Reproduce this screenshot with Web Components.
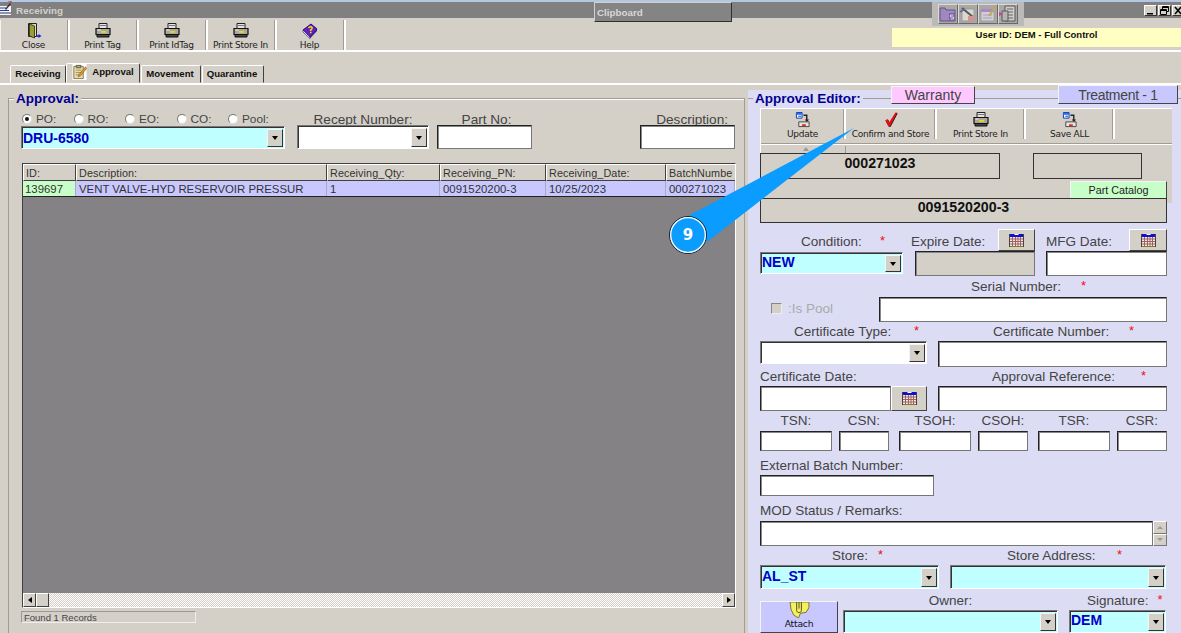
<!DOCTYPE html>
<html>
<head>
<meta charset="utf-8">
<title>Receiving</title>
<style>
html, body { margin: 0; padding: 0; background: #d4d0c8; overflow: hidden; }
body { width: 1181px; height: 633px; font-family: "Liberation Sans", Arial, sans-serif; }
</style>
</head>
<body>
<receiving-window></receiving-window>
<script>
var ICONS = {
  printer: '<svg width="16" height="15" viewBox="0 0 16 15"><path d="M4 .5h8v5H4z" fill="#e4e4e4" stroke="#222"/><path d="M5 2.500h6" stroke="#777"/><path d="M1 5.500h14v6H1z" fill="#aaa6a0" stroke="#111" stroke-width="1.200"/><path d="M2 11.500h12v2.500H2z" fill="#444" stroke="#111"/><path d="M6 8h5v1.800H6z" fill="#e8d820"/><path d="M2.500 7h3" stroke="#f4f4f4"/></svg>',
  door: '<svg width="16" height="18" viewBox="0 0 16 18"><path d="M2.500 1.500h8v13h-8z" fill="#e0dcc0" stroke="#222"/><path d="M3.500 2l5 2v12l-5-2z" fill="#a09c30" stroke="#222" stroke-width=".8"/><path d="M10 14h3" stroke="#1a2ac0" stroke-width="1.500"/><path d="M12.500 12l3 2-3 2z" fill="#1a2ac0"/></svg>',
  help: '<svg width="16" height="16" viewBox="0 0 16 16"><path d="M1 7l8-6 6 5-7 8z" fill="#6a20b8" stroke="#201060"/><path d="M1 7l7 7v1.500L1 9z" fill="#e8e8ff" stroke="#201060" stroke-width=".6"/><path d="M8 14l7-8v2l-7 7.500z" fill="#3020a0"/><path d="M6.500 5c1-2 4-1.500 3.500 .5-.3 1-1.500 1-1.500 2.500" fill="none" stroke="#f0e020" stroke-width="1.500"/><path d="M8 9.500h1.500" stroke="#f0e020" stroke-width="1.300"/></svg>',
  check: '<svg width="16" height="17" viewBox="0 0 18 18"><path d="M2.500 10l2.500-1.500 2 3.500 7-11 2 .5-8 15h-2z" fill="#111" transform="translate(.6 .6)"/><path d="M2.500 10l2.500-1.500 2 3.500 7-11 2 .5-8 15h-2z" fill="#e01018"/></svg>',
  update: '<svg width="16" height="16" viewBox="0 0 16 17"><path d="M1 .5h6v6H1z" fill="#fff" stroke="#1030c0"/><path d="M1 1h6v2H1z" fill="#1a78e0"/><path d="M3 4.500h3" stroke="#1030c0"/><path d="M8.500 3.500h3.500v5" fill="none" stroke="#222" stroke-width="1.500"/><path d="M10 8l2 3 2.500-3z" fill="#222"/><path d="M3.500 10.500h11v5h-11z" fill="#e8e4dc" stroke="#444"/><path d="M7 13h4v2H7z" fill="#d83030"/></svg>',
  calendar: '<svg width="15" height="15" viewBox="0 0 15 15"><path d="M1 1h13v3H1z" fill="#1010d0"/><path d="M5.500 1.500h4" stroke="#fff"/><path d="M1 4h13v9H1z" fill="#f4e8e0"/><path d="M1 6h13M1 8.500h13M1 11h13M3.500 4v9M6.500 4v9M9 4v9M11.500 4v9" stroke="#a06060"/><path d="M1 13h13v1H1z" fill="#808020"/><path d="M.5 1v13M14.500 1v13" stroke="#444"/></svg>',
  attach: '<svg width="21" height="16" viewBox="0 0 22 17"><path d="M1 0h20v6l-3 5-6 1-2 5-5-3-3-6z" fill="#f4f060" stroke="#707030"/><path d="M8 0v9c0 3 5 3 5 0V0M10.500 0v7" fill="none" stroke="#504820"/></svg>',
  note: '<svg width="15" height="16" viewBox="0 0 15 17"><path d="M0 0h15v17H0z" fill="#fff"/><path d="M1.500 2.500h10v13h-10z" fill="#e8dca8" stroke="#807850"/><path d="M4 1.500h5v2.500H4z" fill="#b0a888" stroke="#605840"/><path d="M3.500 6.500h6M3.500 9h6M3.500 11.500h4" stroke="#a09060"/><path d="M14 3L7 11l-1 2.500 2.500-1L15 5z" fill="#e0a030" stroke="#704810" stroke-width=".6"/></svg>',
  mail: '<svg width="12" height="14" viewBox="0 0 12 14"><path d="M0 5h11v9H0z" fill="#f4f4f4"/><path d="M0 7h6M0 9.500h9" stroke="#2040a0"/><path d="M0 12h11" stroke="#303060"/><path d="M5 8l5-6 1 1-5 6z" fill="#303030"/><path d="M8 0h3v2" fill="none" stroke="#c03020"/></svg>',
  s1: '<svg width="18" height="18" viewBox="0 0 18 18"><path d="M1 3h5l1 2h9v11H1z" fill="#a080c8" stroke="#504080"/><path d="M10 8h6v8h-6z" fill="#7050a8"/><path d="M14.500 10h-3v2h3v2h-3" fill="none" stroke="#e8e8f4"/></svg>',
  s2: '<svg width="18" height="18" viewBox="0 0 18 18"><path d="M3 4h12v12H3z" fill="#e8e4dc" stroke="#999"/><path d="M3 3l11 9" stroke="#444" stroke-width="2"/><path d="M9 11h6v5H9z" fill="#e09090"/><path d="M1 7l5-3" stroke="#506090" stroke-width="2"/></svg>',
  s3: '<svg width="18" height="18" viewBox="0 0 18 18"><path d="M2 5h13v11H2z" fill="#dcd8e8" stroke="#a0a0a0"/><path d="M2 4h13v3H2z" fill="#b080c8"/><path d="M4 10h9M4 13h9" stroke="#a0a0c0"/><path d="M10 11l6-9" stroke="#c8a840" stroke-width="2"/></svg>',
  s4: '<svg width="18" height="18" viewBox="0 0 18 18"><path d="M6 1h10v15H6z" fill="#d8d8d8" stroke="#444"/><path d="M8 4h6M8 7h6M8 10h6M8 13h6" stroke="#555"/><path d="M3 6h6v10H3z" fill="#b8b8b8" stroke="#444"/><path d="M0 7l4 2-4 2z" fill="#c83080"/></svg>',
  minimize: '<svg width="11" height="9" viewBox="0 0 11 9"><path d="M2 7h6v1.500H2z" fill="#000"/></svg>',
  restore: '<svg width="11" height="9" viewBox="0 0 11 9"><path d="M3.500 .5h6v5h-6zM3.500 1.500h6" fill="none" stroke="#000"/><path d="M1.500 3.500h6v5h-6z" fill="#d4d0c8" stroke="#000"/><path d="M1.500 4.500h6" stroke="#000"/></svg>',
  close: '<svg width="11" height="9" viewBox="0 0 11 9"><path d="M2 1l6 7M8 1l-6 7" stroke="#000" stroke-width="1.500"/></svg>'
};

var define = function(name, css, html, init) {
  customElements.define(name, class extends HTMLElement {
    constructor() {
      super();
      this.attachShadow({ mode: "open" }).innerHTML = "<style>" + css + "</style>" + html;
    }
    connectedCallback() {
      if (init) init.call(this, this.shadowRoot);
    }
  });
};

define("app-icon", ":host{display:inline-flex;line-height:0}", "", function(root) {
  if (!root.querySelector("svg")) root.innerHTML += ICONS[this.getAttribute("name")] || "";
});

define("title-bar", `
  :host{display:flex;align-items:center;height:16px;margin-top:2px;background:#808080;position:relative;
    font:bold 9.800px "Liberation Sans",sans-serif;color:#d4d0c8;letter-spacing:.1px}
  .ic{width:16px;padding-top:0;margin-top:-2px}
  .clip{position:absolute;left:594px;top:0;width:138px;height:20px;box-sizing:border-box;background:#848484;
    border:1px solid;border-color:#d4d0c8 #303030 #303030 #d4d0c8;padding:4px 2px;color:#d8d8d8;letter-spacing:0}
  .tools{position:absolute;left:932px;top:0;width:92px;height:24px;background:#bcbab6;display:flex;justify-content:center;padding-top:2px;box-sizing:border-box}
  .tools span{width:20px;height:20px;box-sizing:border-box;background:#aaa8a4;border:1px solid;border-color:#dcdad6 #686868 #686868 #dcdad6;display:flex;align-items:center;justify-content:center}
  .tools app-icon{opacity:.8}
  .btns{position:absolute;left:1144px;top:3px;display:flex;gap:1px}
  .btns b{width:13px;height:11px;box-sizing:border-box;background:#d4d0c8;border:1px solid;border-color:#fff #333 #333 #fff;display:flex;align-items:center;justify-content:center;overflow:hidden}
`, `
  <div class="ic"><app-icon name="mail"></app-icon></div><div>Receiving</div>
  <div class="clip">Clipboard</div>
  <div class="tools">
    <span><app-icon name="s1"></app-icon></span><span><app-icon name="s2"></app-icon></span>
    <span><app-icon name="s3"></app-icon></span><span><app-icon name="s4"></app-icon></span>
  </div>
  <div class="btns"><b><app-icon name="minimize"></app-icon></b><b><app-icon name="restore"></app-icon></b><b><app-icon name="close"></app-icon></b></div>
`);

define("tool-button", `
  :host{display:flex;flex-direction:column;align-items:center;box-sizing:border-box;width:69px;height:30px;padding-right:2px;
    border-right:2px solid #fff;box-shadow:inset -1px 0 0 #a09c94;font:9px "DejaVu Sans",sans-serif;color:#222;letter-spacing:-.25px;white-space:nowrap}
  .i{height:19px;display:flex;align-items:center;padding-top:1px}
`, `<div class="i"><slot name="icon"></slot></div><div><slot></slot></div>`);

define("main-toolbar", `
  :host{display:flex;height:34px;box-sizing:border-box;padding:2px 0 0 0;border-bottom:2px solid;border-image:linear-gradient(#808080 50%,#fff 50%) 2;position:relative}
  .grip{width:1px;height:30px;background:#f4f4f4;flex:none}
  .yellow{position:absolute;left:892px;top:10px;width:289px;height:19px;background:#ffffc4;text-align:center;
    font:bold 9.500px/13px "Liberation Sans",sans-serif;color:#111}
`, `<div class="grip"></div><slot></slot><div class="yellow"><slot name="user"></slot></div>`);

define("tab-strip", `
  :host{display:flex;align-items:flex-end;height:33px;padding-left:10px;box-sizing:border-box;border-bottom:2px solid;border-image:linear-gradient(#404040 50%,#fff 50%) 2}
`, `<slot></slot>`);

define("tab-item", `
  :host{display:flex;align-items:center;justify-content:center;gap:5px;height:18px;box-sizing:border-box;padding:0 0 2px;background:#d4d0c8;
    border:1px solid;border-color:#fff #404040 transparent #fff;border-radius:2px 2px 0 0;font:bold 9.600px "Liberation Sans",sans-serif;color:#111;margin-right:1px}
  :host([active]){height:20px;padding:0 0 3px;margin-right:1px}
`, `<slot name="icon"></slot><slot></slot>`);

define("group-box", `
  :host{display:block;position:relative;box-sizing:border-box;border-top:1px solid #a09c94;box-shadow:inset 0 1px 0 #fff}
  .legend{position:absolute;left:5px;top:-7px;font:bold 13.500px/14px "Liberation Sans",sans-serif;color:#000090;padding:0 2px;background:var(--legend-bg,#d4d0c8)}
`, `<div class="legend"><slot name="legend"></slot></div><slot></slot>`);

define("win-input", `
  :host{display:block;box-sizing:border-box;background:#fff;border:1px solid;border-color:#222 #777 #777 #222;
    box-shadow:inset 1px 1px 0 #888;}
  :host([disabled]){background:#d4d0c8}
`, ``);

define("win-combo", `
  :host{display:flex;box-sizing:border-box;background:var(--bg,#fff);border:1px solid;border-color:#777 #fff #fff #777;
    box-shadow:inset 1px 1px 0 #333;font:bold 14px "Liberation Sans",sans-serif;color:#0000c8}
  .t{flex:1;padding:var(--pt,2px) 0 0 1px;line-height:17px;white-space:nowrap}
  .b{width:16px;margin:2px 1px 1px 0;box-sizing:border-box;background:#d4d0c8;border:1px solid;border-color:#f4f4f4 #333 #333 #f4f4f4;display:flex;align-items:center;justify-content:center}
  .b i{border:3.500px solid transparent;border-top:4px solid #000;border-bottom:0;display:block}
`, `<div class="t"><slot></slot></div><div class="b"><i></i></div>`);

define("calendar-button", `
  :host{display:flex;align-items:center;justify-content:center;box-sizing:border-box;background:#d4d0c8;
    border:1px solid;border-color:#fff #444 #444 #fff}
`, `<app-icon name="calendar"></app-icon>`);

define("radio-item", `
  :host{display:flex;align-items:center;gap:4px;font:11.800px "Liberation Sans",sans-serif;color:#444}
  i{width:10px;height:10px;border-radius:50%;box-sizing:border-box;background:#fff;border:1px solid;border-color:#777 #ddd #ddd #777;display:flex;align-items:center;justify-content:center}
  :host([checked]) i::after{content:"";width:4px;height:4px;border-radius:50%;background:#111}
`, `<i></i><span><slot></slot></span>`);

define("data-grid", `
  :host{display:flex;flex-direction:column;box-sizing:border-box;background:#848284;border:1px solid;border-color:#404040 #fff #fff #404040;
    font:11.400px "Liberation Sans",sans-serif;color:#333}
  .row{display:grid;grid-template-columns:53px 251px 113px 106px 120px 1fr;white-space:nowrap}
  .head{height:17px;background:#d4d0c8;font-size:10.800px}
  .head span{box-sizing:border-box;padding:2px 0 0 2px;overflow:hidden;border-right:1px solid #404040;border-bottom:1px solid #404040;border-left:1px solid #fff;border-top:1px solid #fff;letter-spacing:.1px}
  .head span:last-child{border-right:0}
  .body{height:16px;background:#c8c8ff;border-bottom:1px solid #222;box-sizing:border-box}
  .body span{box-sizing:border-box;padding:2px 0 0 3px;border-right:1px solid #a8a8cc;overflow:hidden}
  .body span:first-child{background:#c8ffc8;padding-left:2px}
  .fill{flex:1}
  .scroll{height:14px;display:flex;align-items:stretch;background-color:#eeece8;
    background-image:repeating-conic-gradient(#d4d0c8 0 25%,#fff 0 50%);background-size:2px 2px}
  .scroll b{width:13px;box-sizing:border-box;background:#d4d0c8;border:1px solid;border-color:#fff #404040 #404040 #fff;display:flex;align-items:center;justify-content:center}
  .scroll .th{margin-right:auto}
  .l{border:3.500px solid transparent;border-right:4px solid #000;border-left:0}
  .r{border:3.500px solid transparent;border-left:4px solid #000;border-right:0}
`, `
  <div class="row head"><span>ID:</span><span>Description:</span><span>Receiving_Qty:</span><span>Receiving_PN:</span><span>Receiving_Date:</span><span>BatchNumbe</span></div>
  <div class="row body"><span>139697</span><span>VENT VALVE-HYD RESERVOIR PRESSUR</span><span>1</span><span>0091520200-3</span><span>10/25/2023</span><span>000271023</span></div>
  <div class="fill"></div>
  <div class="scroll"><b><i class="l"></i></b><b class="th"></b><b><i class="r"></i></b></div>
`);

define("approval-panel", `
  :host{display:block;width:748px;box-sizing:border-box;padding:13px 3px 0 8px;height:100%;font-family:"Liberation Sans",sans-serif}
  group-box{height:100%;border-left:1px solid #a09c94;border-right:1px solid #a09c94}
  .wrap{padding:10px 9px 0 13px;box-sizing:border-box;height:100%;display:flex;flex-direction:column}
  .labels{display:flex;height:18px;align-items:flex-end;font-size:13.600px;color:#444}
  .radios{display:flex;width:275px;padding:0 0 1px 0;box-sizing:border-box;align-self:flex-end}
  .radios radio-item{width:51.500px}
  .labels .l1{width:132px;margin-right:9px;text-align:center;white-space:nowrap}
  .labels .l2{width:97px;text-align:center}
  .labels .l3{flex:1;text-align:right;padding-right:7px}
  .inputs{display:flex;height:24px;margin-top:-2px}
  .po{width:264px;height:23px;margin:1px 12px 0 -1px;--bg:#c0ffff;--pt:3px}
  .rn{width:133px;height:24px;margin-right:8px}
  .pn{width:95px;height:24px}
  .ds{width:95px;height:24px;margin-left:108px}
  data-grid{width:714px;height:445px;margin-top:14px;flex:none}
  .status{width:175px;height:12px;margin:3px 0 0 -1px;box-sizing:border-box;border:1px solid;border-color:#999 #eee #eee #999;
    font:9.500px/11px "Liberation Sans",sans-serif;color:#444;padding-left:2px;flex:none}
`, `
  <group-box>
    <span slot="legend">Approval:</span>
    <div class="wrap">
      <div class="labels">
        <div class="radios">
          <radio-item checked>PO:</radio-item><radio-item>RO:</radio-item><radio-item>EO:</radio-item><radio-item>CO:</radio-item><radio-item>Pool:</radio-item>
        </div>
        <div class="l1">Recept Number:</div><div class="l2">Part No:</div><div class="l3">Description:</div>
      </div>
      <div class="inputs">
        <win-combo class="po">DRU-6580</win-combo>
        <win-combo class="rn"></win-combo>
        <win-input class="pn"></win-input>
        <win-input class="ds"></win-input>
      </div>
      <data-grid></data-grid>
      <div class="status">Found 1 Records</div>
    </div>
  </group-box>
`);

define("color-button", `
  :host{display:flex;align-items:center;justify-content:center;box-sizing:border-box;background:var(--bg);
    border:1px solid;border-color:#f4f4f4 #444 #444 #f4f4f4;color:#444;font-size:14px;white-space:nowrap}
`, `<slot></slot>`);

define("editor-panel", `
  :host{display:block;box-sizing:border-box;margin:5px 0 0 0;flex:1;height:543px;background:#dcdcf5;font-family:"Liberation Sans",sans-serif;position:relative}
  group-box{--legend-bg:#dcdcf5;height:100%;padding:0 0 0 12px;box-sizing:border-box;top:8px;box-shadow:none}
  .warranty{position:absolute;left:143px;top:-13px;width:84px;height:18px;--bg:#ffc8ff}
  .treatment{position:absolute;left:310px;top:-14px;width:120px;height:19px;--bg:#c8c8ff;letter-spacing:-.3px}
  .tools{width:412px;height:95px;margin:9px 0 -5px 0;background:#d4d0c8;border-top:1px solid #fff;border-left:1px solid #fff;box-sizing:border-box}
  .bar{display:flex;height:35px;box-sizing:border-box;border-bottom:1px solid #a09c94;box-shadow:0 1px 0 #fff}
  .bar tool-button{width:89px;height:30px;padding-right:0}
  .bar tool-button:first-child{width:85px}
  .bar tool-button:nth-child(2){width:91px}
  .stub{height:9px;position:relative}
  .stub::before{content:"";position:absolute;left:84px;top:2px;height:7px;border-left:1px solid #a09c94}
  .stub::after{content:"";position:absolute;left:42px;top:3px;border:3px solid transparent;border-bottom:4px solid #999;border-top:0}
  .sec{display:flex;margin-left:-1px}
  .box{height:26px;box-sizing:border-box;background:#d4d0c8;border:1px solid #333;font:bold 14.200px/18px "Liberation Sans",sans-serif;color:#111;text-align:center}
  .part{width:97px;height:18px;margin:2px 0 0 309px;--bg:#c8ffc8;font-size:10.800px;color:#222}
  .bn{width:407px;height:25px;line-height:17px;position:relative}
  .form{display:grid;grid-template-rows:23px 25px 21px 25px 19px 26px 19px 25px 20px 20px 24px 21px 25px 25px 19px 24px 44px;margin-top:5px;width:407px;color:#444;font-size:13.500px}
  .r{display:flex;white-space:nowrap}
  .lab{align-items:flex-end;line-height:15px}
  .lab>span{display:block;flex:none;padding-bottom:2px;box-sizing:border-box}
  .lab.up>span{padding-bottom:3px}
  .st{color:#f01010;font-size:13px;position:relative;top:-1px}
  .cyan{--bg:#c0ffff}
  .cal{width:37px;height:22px}
  .tsn span{text-align:center}
  .spin{width:14px;display:flex;flex-direction:column}
  .spin b{flex:1;box-sizing:border-box;background:#d4d0c8;border:1px solid;border-color:#fff #777 #777 #fff;display:flex;align-items:center;justify-content:center}
  .spin i{border:3px solid transparent;border-bottom:3px solid #999;border-top:0}
  .spin b+b i{border-top:3px solid #999;border-bottom:0}
  .pool{display:flex;align-items:center;color:#aaa;width:119px;padding:0 0 2px 11px;box-sizing:border-box}
  .pool i{width:11px;height:11px;box-sizing:border-box;background:#d4d0c8;border:1px solid;border-color:#888 #eee #eee #888;margin-right:6px}
  .attach{width:78px;height:32px;margin-top:12px;box-sizing:border-box;background:#c8c8ff;border:1px solid;border-color:#f4f4f4 #444 #444 #f4f4f4;display:flex;flex-direction:column;align-items:center;font:9.200px/11px "DejaVu Sans",sans-serif;color:#111;letter-spacing:-.2px}
  .own{display:flex;flex-direction:column}
  .own>div:first-child{height:21px;line-height:24px}
`, `
  <group-box>
    <span slot="legend">Approval Editor:</span>
    <color-button class="warranty">Warranty</color-button>
    <color-button class="treatment">Treatment - 1</color-button>
    <div class="tools">
      <div class="bar">
        <tool-button><app-icon slot="icon" name="update"></app-icon>Update</tool-button>
        <tool-button><app-icon slot="icon" name="check"></app-icon>Confirm and Store</tool-button>
        <tool-button><app-icon slot="icon" name="printer"></app-icon>Print Store In</tool-button>
        <tool-button><app-icon slot="icon" name="update"></app-icon>Save ALL</tool-button>
      </div>
      <div class="stub"></div>
      <div class="sec">
        <div class="box" style="width:240px">000271023</div>
        <div class="box" style="width:109px;margin-left:33px"></div>
      </div>
      <color-button class="part">Part Catalog</color-button>
    </div>
    <div class="box bn">0091520200-3</div>
    <div class="form">
      <div class="r lab">
        <span style="width:41px"></span><span style="width:79px">Condition:</span><span class="st" style="width:31px">*</span>
        <span style="width:87px">Expire Date:</span><calendar-button class="cal"></calendar-button>
        <span style="width:11px"></span><span style="width:83px">MFG Date:</span><calendar-button class="cal" style="width:38px"></calendar-button>
      </div>
      <div class="r">
        <win-combo class="cyan" style="width:143px;height:22px;margin:1px 12px 0 0;--pt:1px">NEW</win-combo>
        <win-input disabled style="width:120px;height:25px"></win-input>
        <win-input style="width:121px;height:25px;margin-left:11px"></win-input>
      </div>
      <div class="r lab up"><span style="width:211px"></span><span style="width:110px">Serial Number:</span><span class="st">*</span></div>
      <div class="r">
        <div class="pool"><i></i>:Is Pool</div>
        <win-input style="width:288px;height:25px"></win-input>
      </div>
      <div class="r lab">
        <span style="width:34px"></span><span style="width:120px">Certificate Type:</span><span class="st" style="width:79px">*</span>
        <span style="width:136px">Certificate Number:</span><span class="st">*</span>
      </div>
      <div class="r">
        <win-combo style="width:167px;height:23px;margin-right:11px"></win-combo>
        <win-input style="width:229px;height:26px"></win-input>
      </div>
      <div class="r lab">
        <span style="width:232px">Certificate Date:</span><span style="width:149px">Approval Reference:</span><span class="st">*</span>
      </div>
      <div class="r">
        <win-input style="width:131px;height:25px"></win-input>
        <calendar-button style="width:36px;height:25px;margin-right:11px"></calendar-button>
        <win-input style="width:229px;height:25px"></win-input>
      </div>
      <div class="r lab tsn up">
        <span style="width:72px">TSN:</span><span style="width:7px"></span><span style="width:50px">CSN:</span><span style="width:10px"></span>
        <span style="width:72px">TSOH:</span><span style="width:7px"></span><span style="width:50px">CSOH:</span><span style="width:10px"></span>
        <span style="width:72px">TSR:</span><span style="width:7px"></span><span style="width:50px">CSR:</span>
      </div>
      <div class="r">
        <win-input style="width:72px;height:20px"></win-input><win-input style="width:50px;height:20px;margin-left:7px"></win-input>
        <win-input style="width:72px;height:20px;margin-left:10px"></win-input><win-input style="width:50px;height:20px;margin-left:7px"></win-input>
        <win-input style="width:72px;height:20px;margin-left:10px"></win-input><win-input style="width:50px;height:20px;margin-left:7px"></win-input>
      </div>
      <div class="r lab"><span>External Batch Number:</span></div>
      <div class="r"><win-input style="width:174px;height:21px"></win-input></div>
      <div class="r lab up"><span>MOD Status / Remarks:</span></div>
      <div class="r">
        <win-input style="width:393px;height:25px"></win-input>
        <div class="spin"><b><i></i></b><b><i></i></b></div>
      </div>
      <div class="r lab">
        <span style="width:72px"></span><span style="width:46px">Store:</span><span class="st" style="width:129px">*</span>
        <span style="width:110px">Store Address:</span><span class="st">*</span>
      </div>
      <div class="r">
        <win-combo class="cyan" style="width:179px;height:24px;margin-right:11px">AL_ST</win-combo>
        <win-combo class="cyan" style="width:216px;height:24px"></win-combo>
      </div>
      <div class="r">
        <div class="attach"><app-icon name="attach"></app-icon>Attach</div>
        <div class="own" style="width:215px;margin-left:5px">
          <div style="text-align:center">Owner:</div>
          <win-combo class="cyan" style="height:23px"></win-combo>
        </div>
        <div class="own" style="width:97px;margin-left:11px">
          <div style="padding-left:18px">Signature:<span class="st" style="margin-left:9px">*</span></div>
          <win-combo class="cyan" style="height:23px;--pt:1px">DEM</win-combo>
        </div>
      </div>
    </div>
  </group-box>
`);

define("call-out", `
  :host{position:absolute;left:668px;top:126px;width:190px;height:130px;display:block}
  svg{position:absolute;left:0;top:0}
  span{position:absolute;left:0;top:96px;width:40px;text-align:center;font:bold 15px/26px "DejaVu Sans",sans-serif;color:#fff}
`, `
  <svg width="190" height="130" viewBox="668 126 190 130">
    <path d="M854 128L688 216L707 242z" fill="#0a9cff"/>
    <circle cx="688" cy="235" r="18.500" fill="#0a9cff" stroke="#222" stroke-width="1"/>
    <circle cx="688" cy="235" r="17.300" fill="none" stroke="#fff" stroke-width="1.300"/>
  </svg>
  <span><slot></slot></span>
`);

define("receiving-window", `
  :host{display:flex;flex-direction:column;position:relative;width:1181px;height:633px;overflow:hidden;background:#d4d0c8}
  .top{height:2px;background:#b4c8e4;margin-bottom:-2px}
  .main{display:flex;flex:1;min-height:0}
`, `
  <div class="top"></div>
  <title-bar></title-bar>
  <main-toolbar>
    <tool-button><app-icon slot="icon" name="door"></app-icon>Close</tool-button>
    <tool-button><app-icon slot="icon" name="printer"></app-icon>Print Tag</tool-button>
    <tool-button><app-icon slot="icon" name="printer"></app-icon>Print IdTag</tool-button>
    <tool-button><app-icon slot="icon" name="printer"></app-icon>Print Store In</tool-button>
    <tool-button><app-icon slot="icon" name="help"></app-icon>Help</tool-button>
    <span slot="user">User ID: DEM - Full Control</span>
  </main-toolbar>
  <tab-strip>
    <tab-item style="width:56px;margin-right:0">Receiving</tab-item>
    <tab-item active style="width:74px"><app-icon slot="icon" name="note"></app-icon>Approval</tab-item>
    <tab-item style="width:60px;padding-right:2px">Movement</tab-item>
    <tab-item style="width:62px;padding-right:2px">Quarantine</tab-item>
  </tab-strip>
  <div class="main">
    <approval-panel></approval-panel>
    <editor-panel></editor-panel>
  </div>
  <call-out>9</call-out>
`);
</script>
</body>
</html>
